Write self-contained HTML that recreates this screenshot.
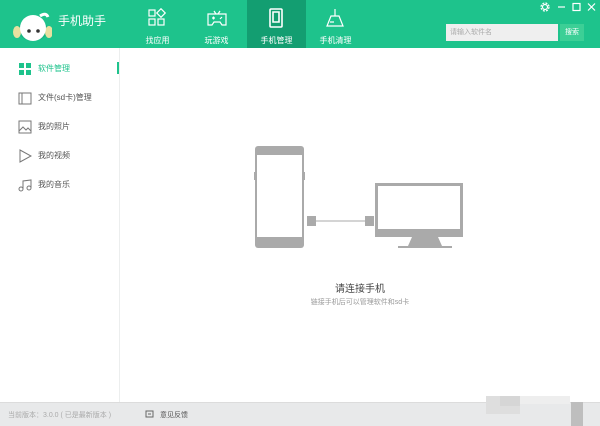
<!DOCTYPE html>
<html><head><meta charset="utf-8"><style>
*{margin:0;padding:0;box-sizing:border-box}
body{width:600px;height:426px;overflow:hidden;background:#fff;font-family:"Liberation Sans","Noto Sans CJK SC",sans-serif;position:relative}
.hd{position:absolute;left:0;top:0;width:600px;height:48px;background:#1ec38c}
.tab{position:absolute;top:0;width:59px;height:48px;color:#fff;font-size:8px;text-align:center}
.tab span{position:absolute;left:0;right:0;top:35px}
.tab svg{position:absolute;left:19px;top:8px}
.act{background:#139e71}
.sb{position:absolute;left:0;top:48px;width:120px;height:354px;border-right:1px solid #eceeee}
.it{position:absolute;left:18px;font-size:8px;color:#555;height:14px;line-height:14px}
.it svg{position:absolute;left:0;top:0}
.it span{position:absolute;left:20px;white-space:nowrap}
.ft{position:absolute;left:0;top:402px;width:600px;height:24px;background:#e8e9ea;border-top:1px solid #dcdcdc;font-size:7px;color:#aaa}
</style></head><body>
<div class="hd">
 <svg style="position:absolute;left:10px;top:8px" width="42" height="36"><ellipse cx="23" cy="22" rx="15" ry="11" fill="#14a87a" opacity=".5"/><ellipse cx="7" cy="24" rx="4" ry="6" fill="#e8e0a0"/><ellipse cx="39" cy="24" rx="4" ry="6" fill="#e8e0a0"/><circle cx="23" cy="20" r="13" fill="#fff"/><path d="M30 8 q6 -4 8 1" stroke="#fff" stroke-width="3" fill="none"/><circle cx="19" cy="23" r="1.8" fill="#333"/><circle cx="28" cy="23" r="1.8" fill="#333"/></svg>
 <div style="position:absolute;left:58px;top:12px;color:#fff;font-size:12px">手机助手</div>
 <div class="tab" style="left:128px"><svg width="20" height="20" fill="none" stroke="#fff" stroke-width="1.2"><rect x="2" y="2" width="6" height="6"/><rect x="11" y="2" width="6" height="6" transform="rotate(45 14 5)"/><rect x="2" y="11" width="6" height="6"/><rect x="11" y="11" width="6" height="6"/></svg><span>找应用</span></div>
 <div class="tab" style="left:187px"><svg width="22" height="20" fill="none" stroke="#fff" stroke-width="1.2"><path d="M2 6h18v11h-4l-2-3h-6l-2 3h-4z"/><path d="M8 3l2 3M14 3l-2 3"/><path d="M6 10h3M7.5 8.5v3M14 10l1 1M16 9l-1 1"/></svg><span>玩游戏</span></div>
 <div class="tab act" style="left:247px"><svg width="20" height="20" fill="none" stroke="#fff" stroke-width="1.6"><rect x="4" y="1" width="12" height="18" rx="1"/><path d="M7 4h6v10h-6z"/></svg><span>手机管理</span></div>
 <div class="tab" style="left:306px"><svg width="20" height="20" fill="none" stroke="#fff" stroke-width="1.2"><path d="M10 1v7M6 8h8l4 10h-16z M5 14h4"/></svg><span>手机清理</span></div>
 <svg style="position:absolute;left:540px;top:2px" width="58" height="10" fill="none" stroke="#fff" stroke-width="1.2"><circle cx="5" cy="5" r="2.5"/><circle cx="5" cy="5" r="4" stroke-dasharray="2 1.2"/><path d="M18 5h7"/><rect x="33" y="1.5" width="7" height="7"/><path d="M48 1.5l7 7M55 1.5l-7 7"/></svg>
 <div style="position:absolute;left:446px;top:24px;width:112px;height:17px;background:#efefef;font-size:7px;color:#aaa;line-height:17px;padding-left:4px">请输入软件名</div>
 <div style="position:absolute;left:560px;top:24px;width:24px;height:17px;background:#3ccf96;font-size:7px;color:#fff;line-height:17px;text-align:center">搜索</div>
</div>
<div class="sb">
 <div style="position:absolute;left:117px;top:14px;width:2px;height:12px;background:#1ec38c"></div>
 <div class="it" style="top:14px;color:#1ec38c"><svg width="14" height="14" fill="#1ec38c"><rect x="1" y="1" width="5" height="5"/><rect x="8" y="1" width="5" height="5"/><rect x="1" y="8" width="5" height="5"/><rect x="8" y="8" width="5" height="5"/></svg><span>软件管理</span></div>
 <div class="it" style="top:43px"><svg width="14" height="14" fill="none" stroke="#777"><path d="M1 2h12v11h-12zM4 2v11"/></svg><span>文件(sd卡)管理</span></div>
 <div class="it" style="top:72px"><svg width="14" height="14" fill="none" stroke="#777"><rect x="1" y="1" width="12" height="12"/><path d="M1 11l4-4 3 3 2-2 3 3"/></svg><span>我的照片</span></div>
 <div class="it" style="top:101px"><svg width="14" height="14" fill="none" stroke="#777"><path d="M2 1l11 6-11 6z"/></svg><span>我的视频</span></div>
 <div class="it" style="top:130px"><svg width="14" height="14" fill="none" stroke="#777"><circle cx="3" cy="11" r="2"/><circle cx="11" cy="10" r="2"/><path d="M5 11V3l8-1v8"/></svg><span>我的音乐</span></div>
</div>
<svg style="position:absolute;left:250px;top:140px" width="220" height="115">
 <rect x="5" y="6" width="49" height="102" rx="3" fill="#aaa"/>
 <rect x="7" y="15" width="45" height="82" fill="#fff"/>
 <rect x="4" y="32" width="1" height="8" fill="#aaa"/><rect x="54" y="32" width="1" height="8" fill="#aaa"/>
 <rect x="57" y="76" width="9" height="10" fill="#aaa"/>
 <rect x="66" y="80.5" width="49" height="1" fill="#aaa"/>
 <rect x="115" y="76" width="9" height="10" fill="#aaa"/>
 <rect x="125" y="43" width="88" height="54" fill="#aaa"/>
 <rect x="128" y="46" width="82" height="43" fill="#fff"/>
 <path d="M162 97h26l4 9h-34z" fill="#aaa"/>
 <rect x="148" y="106" width="54" height="2" fill="#aaa"/>
</svg>
<div style="position:absolute;left:300px;top:280px;width:120px;text-align:center;font-size:10px;color:#444">请连接手机</div>
<div style="position:absolute;left:290px;top:297px;width:140px;text-align:center;font-size:7px;color:#999">链接手机后可以管理软件和sd卡</div>
<div class="ft">
 <div style="position:absolute;left:8px;top:7px">当前版本：3.0.0 ( 已是最新版本 )</div>
 <svg style="position:absolute;left:145px;top:7px" width="9" height="9" fill="none" stroke="#666"><rect x="1" y="1" width="7" height="6"/><path d="M3 4h3"/></svg>
 <div style="position:absolute;left:160px;top:7px;color:#555">意见反馈</div>
 <div style="position:absolute;left:486px;top:-7px;width:34px;height:18px;background:#dedede"></div>
 <div style="position:absolute;left:500px;top:-7px;width:20px;height:10px;background:#d6d6d6"></div>
 <div style="position:absolute;left:520px;top:-7px;width:50px;height:8px;background:#eeeeee"></div>
 <div style="position:absolute;left:571px;top:-1px;width:12px;height:24px;background:#bebebe"></div>
</div>
</body></html>
